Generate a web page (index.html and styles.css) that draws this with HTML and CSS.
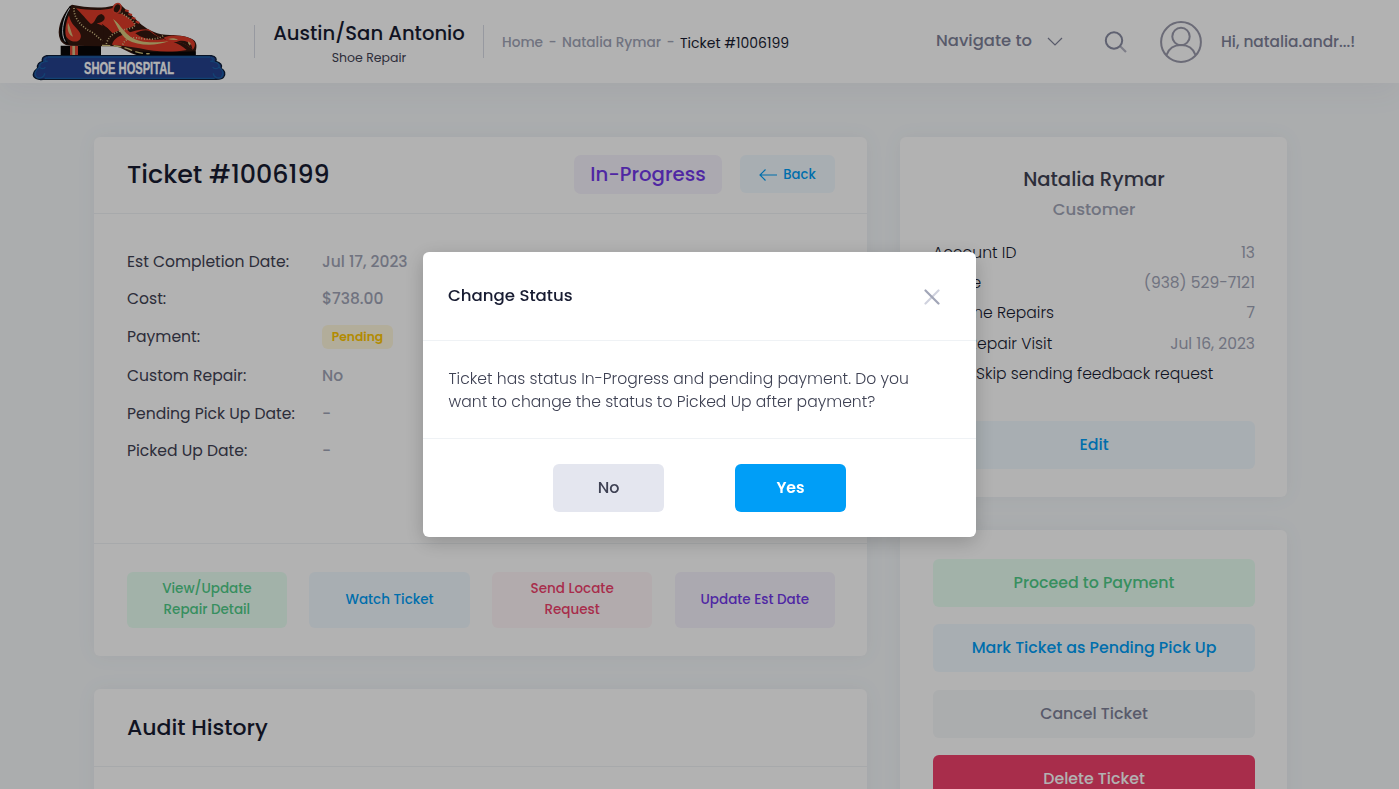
FILE: index.html
```html
<!DOCTYPE html>
<html lang="en">
<head>
<meta charset="utf-8">
<title>Ticket #1006199</title>
<link rel="stylesheet" href="styles.css">
</head>
<body>
<header class="topbar">
  <svg class="logo" viewBox="0 0 720 249" role="img" aria-label="Shoe Hospital">
    <path d="M122 137H243V168H122Z" fill="#080608"/>
    <path d="M150 136H174V167H150Z" fill="#df4634"/><path d="M157 136H165V167H157Z" fill="#d5c18b"/>
    <path d="M150 18C122 52 108 92 121 120C128 132 137 137 154 137L243 139C270 139 286 136 304 145C324 155 344 167 367 167H527V154C532 137 530 124 516 117C498 107 470 105 437 104C400 101 375 83 358 68L306 18C300 10 290 9 280 17C238 28 190 20 156 14Z" fill="#33170f"/>
    <path d="M330 154C344 162 352 167 367 167H527V154C470 158 400 156 330 154Z" fill="#080608"/>
    <path d="M150 18C125 52 114 88 123 115C129 126 137 132 148 134C128 112 132 61 154 19Z" fill="#08090b"/>
    <path d="M149 25C127 60 121 102 136 125" fill="none" stroke="#d9dce0" stroke-width="3"/>
    <path d="M147 46C138 66 134 92 138 108C145 124 169 130 179 119C188 108 179 94 168 83C157 72 151 64 147 46Z" fill="#df3b29"/>
    <path d="M168 25C205 31 246 33 278 24C280 37 292 42 305 41C322 48 338 63 346 75C330 87 300 87 278 100C268 90 264 82 250 78L230 70C257 68 261 48 244 42C225 45 229 68 213 72C201 62 184 39 168 25Z" fill="#df3b29"/>
    <path d="M245 71C254 87 252 103 248 125C261 130 275 124 288 113C273 98 264 83 245 71Z" fill="#33170f"/>
    <path d="M310 104C340 92 366 87 386 88C405 103 421 116 437 119C456 123 475 128 500 150C456 157 410 157 359 145C333 140 302 137 276 134C280 119 293 109 310 104Z" fill="#df3b29"/>
    <path d="M346 100C362 92 378 88 390 94C402 104 416 113 430 118C402 122 368 118 346 100Z" fill="#33170f"/>
    <path d="M430 113C454 103 490 106 513 116C528 124 528 139 518 149C504 136 487 126 471 126C452 127 441 124 430 113Z" fill="#df3b29"/>
    <path d="M470 126C484 118 506 122 514 136L518 149C504 136 490 128 470 126Z" fill="#33170f"/>
    <path d="M279 57C302 73 314 95 330 108C355 124 402 128 446 124C404 139 353 137 322 119C300 104 292 78 279 57Z" fill="#d8c77f"/>
    <path d="M282 56C312 72 326 100 350 110C377 122 410 122 446 122C404 130 361 128 336 113C314 99 299 74 282 56Z" fill="#df3b29"/>
    <path d="M144 68C140 91 147 105 159 110C153 96 152 84 144 68ZM444 117C455 113 466 114 474 119C464 121 453 121 444 117ZM504 124L512 130L510 137L505 131Z" fill="#d8bd7b"/>
    <g fill="none" stroke="#d8c68c" stroke-width="5" stroke-dasharray="3 5">
      <path d="M162 24C160 52 183 82 220 99L247 123"/><path d="M259 132C267 103 291 92 336 84C348 78 347 70 335 60L300 36"/><path d="M308 134C317 113 340 109 371 117C398 119 421 116 433 104"/>
    </g>
    <path d="M246 136C280 136 310 139 331 149C351 158 369 162 389 161" fill="none" stroke="#d8c77f" stroke-width="4" stroke-dasharray="24 10"/>
    <ellipse cx="291" cy="25" rx="11" ry="15" transform="rotate(25 291 25)" fill="#33170f" stroke="#e44330" stroke-width="5"/>
    <path d="M315 31L326 34M325 42L336 45M335 53L346 56M347 64L358 69" stroke="#df3b29" stroke-width="6"/>
    <path d="M80 167H574C589 169 590 178 587 184C602 188 608 196 603 205C615 211 617 222 611 231C606 239 596 238 585 238H69C53 240 39 234 40 223C41 213 48 209 53 205C50 193 58 186 67 185C65 174 71 169 80 167Z" fill="#24418e" stroke="#0c1d37" stroke-width="4"/>
    <path d="M82 172C70 176 74 185 83 184C70 184 57 190 59 201C63 208 73 207 76 201M59 201C45 211 42 222 50 232C60 237 74 231 74 220M572 172C584 176 581 185 571 184C585 184 600 190 597 201C593 208 581 207 578 201M597 201C611 211 611 222 604 232C594 237 580 231 580 220M84 171H570M74 235H584" fill="none" stroke="#1c5fa5" stroke-width="4"/>
    <text class="logo-text" x="192" y="223" textLength="270" lengthAdjust="spacingAndGlyphs">SHOE HOSPITAL</text>
  </svg>
  <div class="org"><span class="org-name">Austin/San Antonio</span><span class="org-sub">Shoe Repair</span></div>
  <nav class="crumbs"><a>Home</a><i>-</i><a>Natalia Rymar</a><i>-</i><span>Ticket #1006199</span></nav>
  <div class="navigate"><span>Navigate to</span>
    <svg width="16" height="10" viewBox="0 0 16 10"><path d="M1 1L8 8L15 1" fill="none" stroke="#7e8299" stroke-width="1.2"/></svg>
  </div>
  <svg class="search" width="24" height="24" viewBox="0 0 24 24" fill="none"><path d="M16.500 16.500L22 22" stroke="#b5b5c3" stroke-width="2.200"/><circle cx="10" cy="10.500" r="8.200" stroke="#8a8da3" stroke-width="2"/></svg>
  <svg class="avatar" width="42" height="42" viewBox="0 0 42 42" fill="none" stroke="#9a9aab" stroke-width="2"><circle cx="21" cy="21" r="19.900"/><circle cx="21" cy="15.500" r="8.700"/><path d="M6.500 34C9 27 15 24 21 24S33 27 35.500 34"/></svg>
  <span class="hello">Hi, natalia.andr...!</span>
</header>

<main class="page">
  <div class="col-main">
    <section class="card ticket">
      <div class="card-head">
        <h1 class="title">Ticket #1006199</h1>
        <span class="status">In-Progress</span>
        <a class="back"><svg width="18" height="12" viewBox="0 0 18 12" fill="none" stroke="#009ef7" stroke-width="1.200"><path d="M6.500 .5L1 6L6.500 11.500M1 6H18"/></svg>Back</a>
      </div>
      <dl class="details">
        <dt>Est Completion Date:</dt><dd>Jul 17, 2023</dd>
        <dt>Cost:</dt><dd>$738.00</dd>
        <dt>Payment:</dt><dd><span class="badge">Pending</span></dd>
        <dt>Custom Repair:</dt><dd>No</dd>
        <dt>Pending Pick Up Date:</dt><dd>-</dd>
        <dt>Picked Up Date:</dt><dd>-</dd>
      </dl>
      <div class="actions">
        <a class="act green">View/Update<br>Repair Detail</a>
        <a class="act blue">Watch Ticket</a>
        <a class="act red">Send Locate<br>Request</a>
        <a class="act purple">Update Est Date</a>
      </div>
    </section>
    <section class="card audit"><div class="audit-head"><h2 class="audit-title">Audit History</h2></div></section>
  </div>
  <aside class="col-side">
    <section class="card customer">
      <h3>Natalia Rymar</h3>
      <p class="role">Customer</p>
      <div class="info">
        <div><span>Account ID</span><b>13</b></div>
        <div><span>Phone</span><b>(938) 529-7121</b></div>
        <div><span>Lifetime Repairs</span><b>7</b></div>
        <div><span>Last Repair Visit</span><b>Jul 16, 2023</b></div>
        <label class="skip"><input type="checkbox"><span>Skip sending feedback request</span></label>
      </div>
      <a class="btn blue">Edit</a>
    </section>
    <section class="card side-actions">
      <a class="btn green">Proceed to Payment</a>
      <a class="btn blue">Mark Ticket as Pending Pick Up</a>
      <a class="btn gray">Cancel Ticket</a>
      <a class="btn danger">Delete Ticket</a>
    </section>
  </aside>
</main>

<div class="backdrop">
  <div class="modal" role="dialog">
    <div class="modal-head"><span>Change Status</span>
      <svg width="16" height="16" viewBox="0 0 16 16" fill="none" stroke-width="2.2" stroke-linecap="round"><path d="M14.500 1.500L1.500 14.500" stroke="#d0d2de"/><path d="M1.500 1.500L14.500 14.500" stroke="#a1a5b7"/></svg>
    </div>
    <div class="modal-body">Ticket has status In-Progress and pending payment. Do you<br>want to change the status to Picked Up after payment?</div>
    <div class="modal-foot"><button class="no">No</button><button class="yes">Yes</button></div>
  </div>
</div>
</body>
</html>
```
FILE: styles.css
```css
* { box-sizing: border-box; }
html, body { height: 100%; overflow: hidden; }
body { margin: 0; background: #f5f8fa; color: #181c32; font-family: Poppins, Inter, sans-serif; font-size: 15px; }
h1, h2, h3, p, dl, dd { margin: 0; }
b, i { font-weight: 400; font-style: normal; }

.topbar { height: 83px; padding-left: 20px; display: flex; align-items: center; background: #fff; box-shadow: 0 10px 30px rgba(82, 63, 105, .05); position: relative; }
.logo { width: 240px; height: 83px; flex: none; margin-right: -6px; }
.logo-text { font: bold 48px "Liberation Sans Narrow", "Liberation Sans", sans-serif; fill: #fff; stroke: #fff; stroke-width: 1px; }
.org { width: 230px; height: 33px; border-left: 1px solid #d9dbe6; border-right: 1px solid #d9dbe6; display: flex; flex-direction: column; align-items: center; justify-content: center; flex: none; white-space: nowrap; }
.org-name { font-size: 19.600px; font-weight: 500; line-height: 30px; padding-top: 3px; }
.org-sub { font-size: 12.500px; line-height: 20px; color: #3f4254; }
.crumbs { display: flex; margin-left: 18px; width: 434px; padding-top: 2px; font-size: 13.700px; line-height: 20px; color: #181c32; white-space: nowrap; }
.crumbs span { font-size: 14px; }
.crumbs a, .crumbs i { color: #a1a5b7; font-weight: 500; }
.crumbs i { width: 19px; text-align: center; }
.navigate { display: flex; align-items: center; gap: 15px; width: 168px; font-size: 16.400px; font-weight: 500; color: #7e8299; white-space: nowrap; }
.navigate span { padding-bottom: 2px; }
.search { width: 24px; margin-right: 32px; }
.avatar { margin-right: 19px; }
.hello { font-size: 15.400px; font-weight: 500; color: #7e8299; white-space: nowrap; }

.page { display: flex; gap: 33px; padding: 54px 112px 0 94px; align-items: flex-start; }
.col-main { width: 773px; display: flex; flex-direction: column; gap: 33px; }
.col-side { width: 387px; display: flex; flex-direction: column; gap: 33px; }
.card { background: #fff; border-radius: 6px; box-shadow: 0 0 20px rgba(76, 87, 125, .06); }
.card-head { height: 77px; padding: 0 32px 2px 33px; border-bottom: 1px solid #eff2f5; display: flex; align-items: center; }
.title { flex: 1; font-size: 25.350px; font-weight: 500; }
.status { width: 148px; height: 39px; margin-right: 18px; border-radius: 7px; background: #f5f2fd; color: #7239ea; font-size: 19.700px; font-weight: 500; display: grid; place-items: center; }
.back { width: 95px; height: 38px; border-radius: 6px; background: #f1faff; color: #009ef7; font-size: 13.200px; font-weight: 500; line-height: 20px; padding-top: 1px; display: flex; align-items: center; justify-content: center; gap: 6px; }
.details { height: 329px; padding: 29px 33px 0; display: grid; grid-template-columns: 195px 1fr; grid-template-rows: 37px 37px 39px 39px 37px 37px; align-items: center; color: #3f4254; font-size: 15.600px; white-space: nowrap; }
.details dd { color: #a1a5b7; font-weight: 500; font-size: 15.500px; }
.badge { display: inline-grid; place-items: center; width: 71px; height: 24px; padding-top: 1px; border-radius: 6px; background: #fff8dd; color: #ffc700; font-size: 12.300px; font-weight: 600; }
.actions { height: 113px; padding: 28px 32px 28px 32.700px; border-top: 1px solid #eff2f5; display: grid; grid-template-columns: repeat(4, 1fr); gap: 22.300px; }
.act { border-radius: 6px; display: flex; align-items: center; justify-content: center; text-align: center; padding-bottom: 2px; font-size: 13.500px; font-weight: 500; line-height: 21px; }
.green { background: #e8fff3; color: #50cd89; }
.blue { background: #f1faff; color: #009ef7; }
.red { background: #fff5f8; color: #f1416c; }
.purple { background: #f5f2fd; color: #7239ea; }
.gray { background: #f5f8fa; color: #7e8299; }
.danger { background: #f1416c; color: #fff; }
.audit { height: 160px; }
.audit-head { height: 78px; padding-left: 33px; border-bottom: 1px solid #eff2f5; display: flex; align-items: center; }
.audit-title { font-size: 22px; font-weight: 500; }

.customer { height: 360px; padding: 27px 32px 0 33px; }
.customer h3 { line-height: 30px; font-size: 19.600px; font-weight: 500; text-align: center; color: #3f4254; }
.role { line-height: 31px; text-align: center; font-size: 16.500px; font-weight: 500; color: #a1a5b7; }
.info { padding-top: 13px; height: 196px; font-size: 15.600px; font-weight: 300; white-space: nowrap; }
.info div { display: flex; justify-content: space-between; line-height: 30.200px; }
.info b { color: #a1a5b7; font-weight: 400; font-size: 15.500px; }
.skip { display: flex; align-items: center; gap: 12px; line-height: 30.500px; }
.skip input { width: 19px; height: 19px; margin: 0 0 0 12px; }
.btn { height: 48px; padding-bottom: 2px; border-radius: 6px; display: grid; place-items: center; font-size: 15.800px; font-weight: 500; flex: none; }
.btn.gray, .btn.danger { padding-bottom: 1px; }
.side-actions { height: 340px; padding: 29px 32px 0 33px; display: flex; flex-direction: column; gap: 17.300px; }

.backdrop { position: fixed; inset: 0; background: rgba(0, 0, 0, .3); display: flex; justify-content: center; align-items: flex-start; padding-top: 252px; }
.modal { width: 553px; height: 285px; border-radius: 6px; background: #fff; box-shadow: 0 5px 20px rgba(0, 0, 0, .2); }
.modal-head { height: 89px; padding: 0 36px 2px 25px; border-bottom: 1px solid #eff2f5; display: flex; align-items: center; justify-content: space-between; font-size: 16.600px; font-weight: 500; }
.modal-head svg { margin-top: 3px; }
.modal-body { height: 98px; padding: 26px 25px 0 25.500px; border-bottom: 1px solid #eff2f5; font-size: 15.620px; line-height: 23px; color: #3f4254; font-weight: 300; white-space: nowrap; }
.modal-foot { height: 98px; display: flex; align-items: center; justify-content: center; gap: 71px; }
.modal-foot button { width: 111px; height: 48px; padding: 0 0 2px; border: 0; border-radius: 6px; font: 500 16px Poppins, Inter, sans-serif; }
.modal-foot .no { background: #e4e6ef; color: #3f4254; }
.modal-foot .yes { background: #009ef7; color: #fff; font-weight: 600; font-size: 15.700px; }
```
